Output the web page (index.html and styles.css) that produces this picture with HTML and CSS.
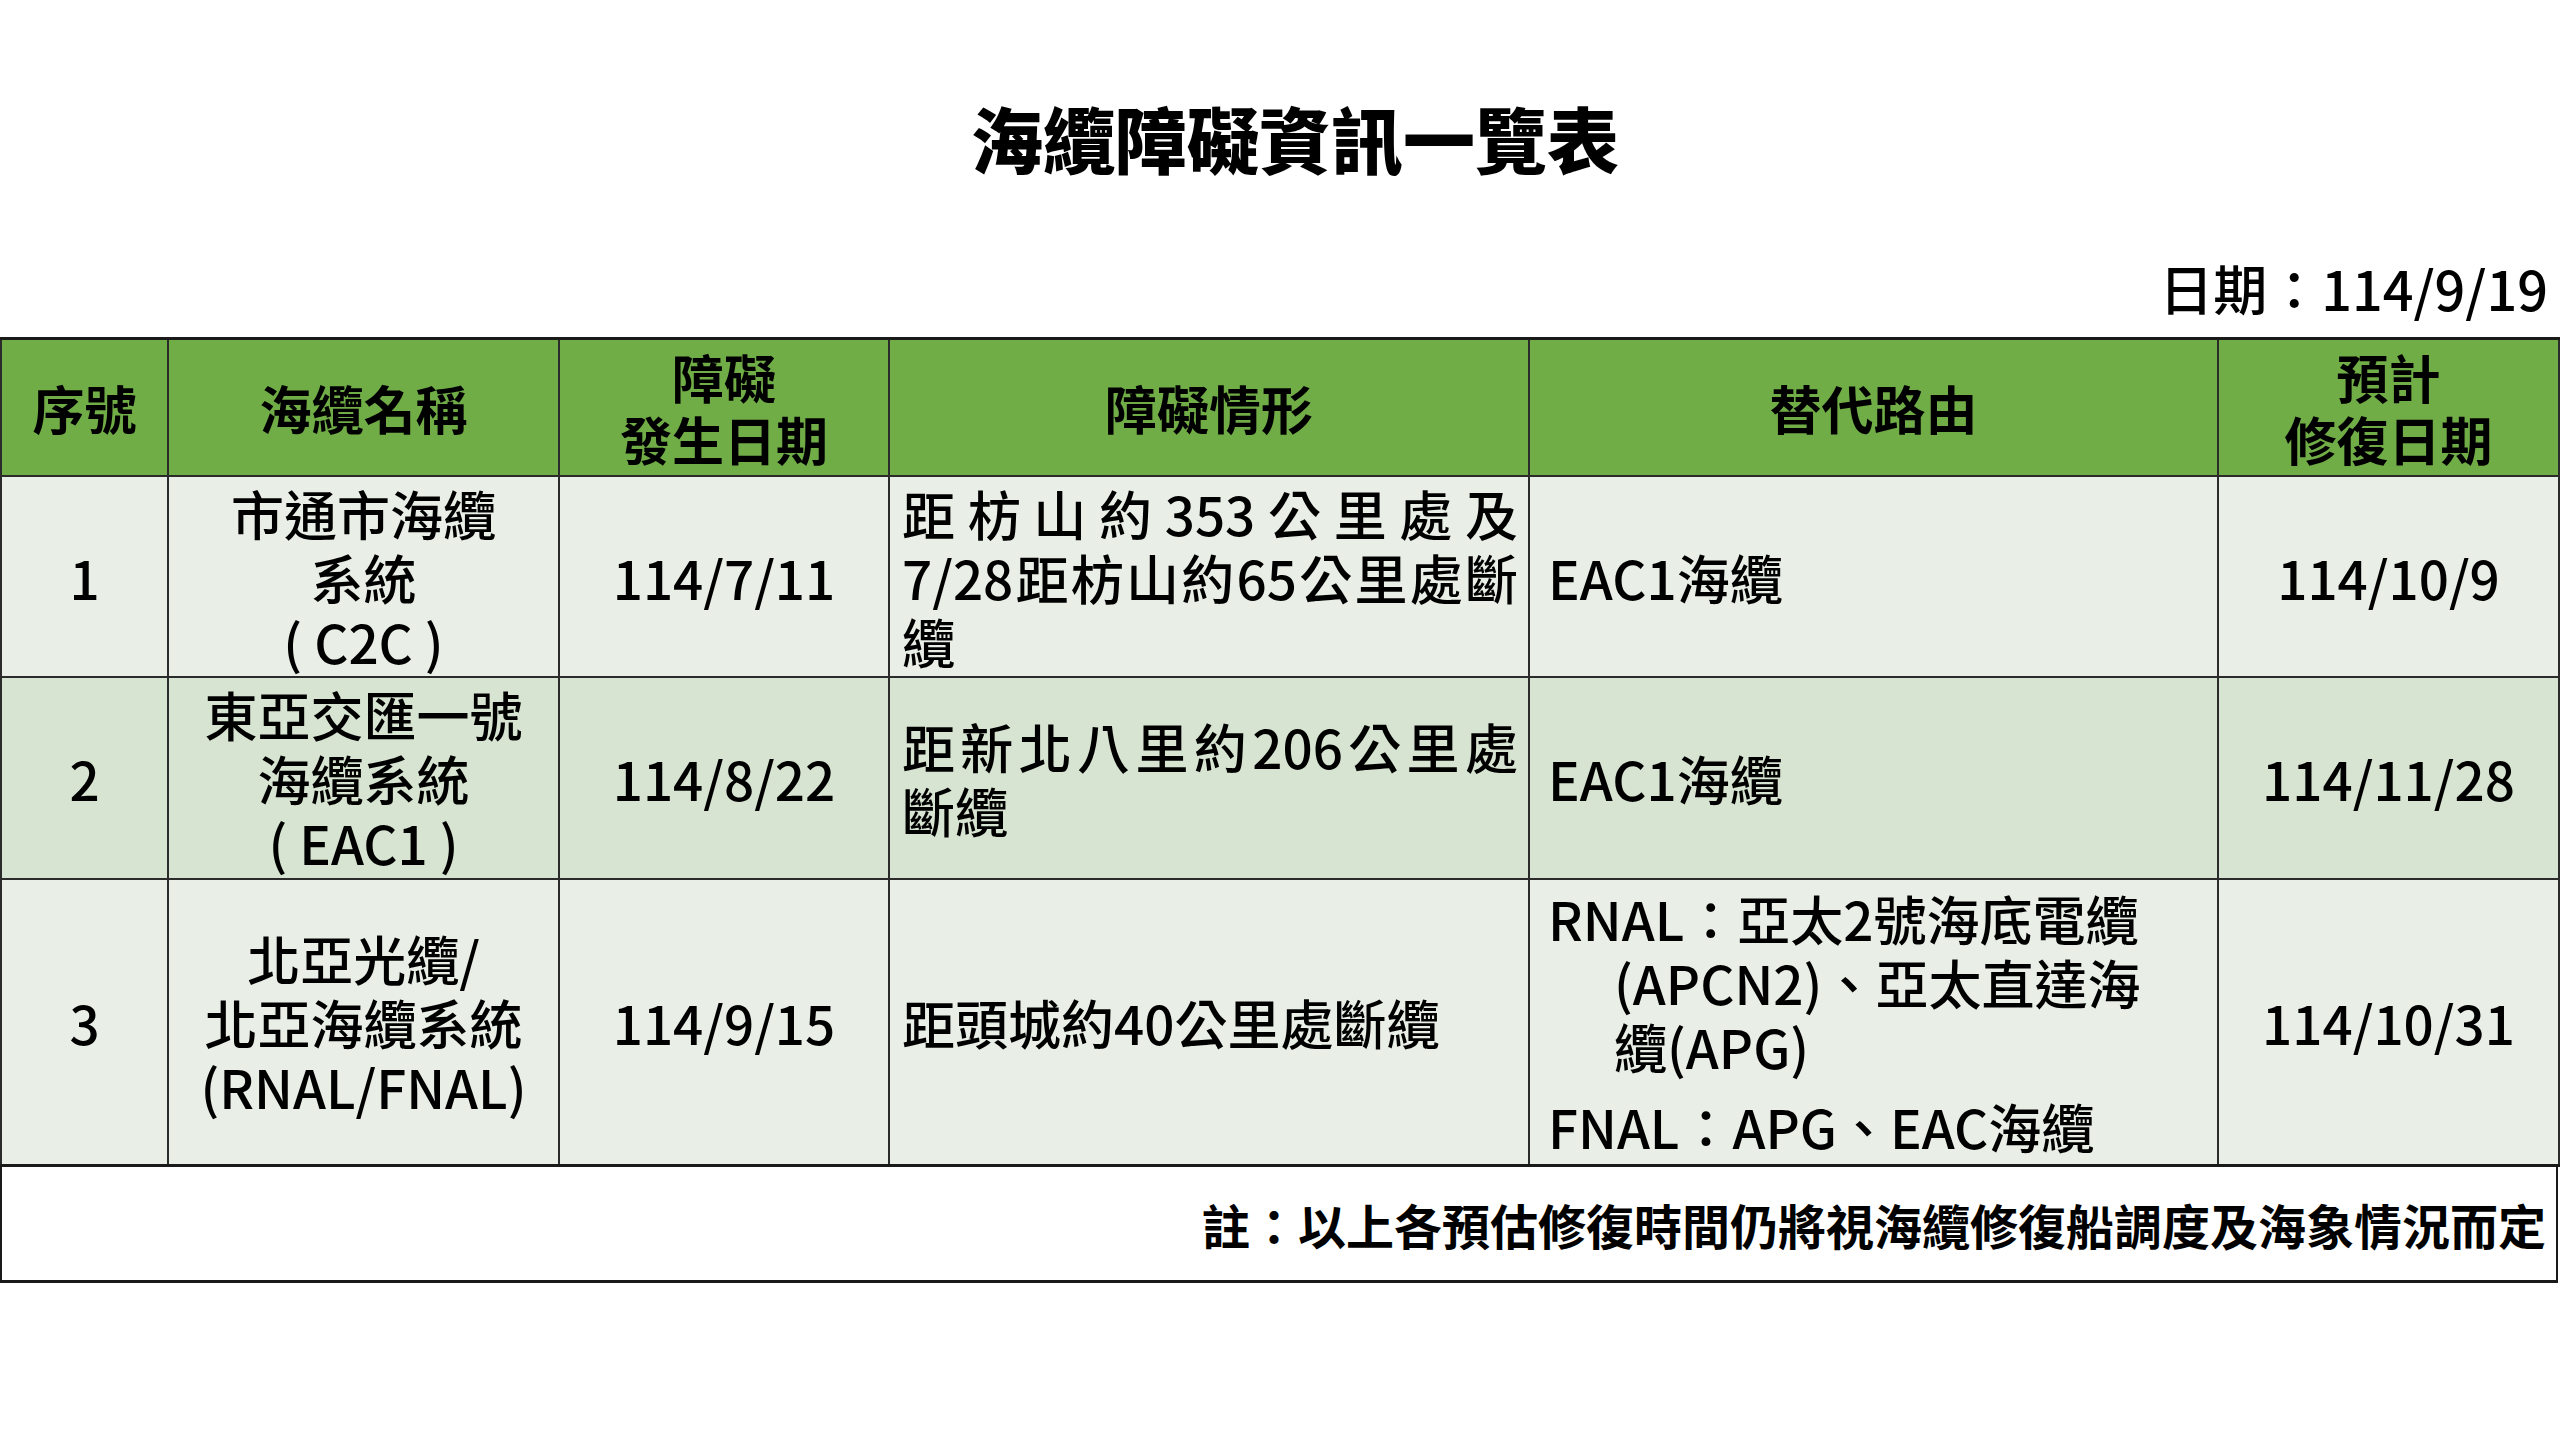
FILE: index.html
```html
<!DOCTYPE html>
<html lang="zh-Hant">
<head>
<meta charset="utf-8">
<title>海纜障礙資訊一覽表</title>
<link rel="stylesheet" href="styles.css">
</head>
<body>
<h1 class="title">海纜障礙資訊一覽表</h1>
<div class="date">日期：114/9/19</div>
<table class="grid">
  <colgroup>
    <col class="c1"><col class="c2"><col class="c3"><col class="c4"><col class="c5"><col class="c6">
  </colgroup>
  <thead>
    <tr class="head">
      <th>序號</th>
      <th>海纜名稱</th>
      <th>障礙<br>發生日期</th>
      <th>障礙情形</th>
      <th>替代路由</th>
      <th>預計<br>修復日期</th>
    </tr>
  </thead>
  <tbody>
    <tr class="row light r1">
      <td class="ctr">1</td>
      <td class="ctr">市通市海纜<br>系統<br>( C2C )</td>
      <td class="ctr">114/7/11</td>
      <td class="desc"><span class="jl">距枋山約353公里處及</span><span class="jl">7/28距枋山約65公里處斷</span><span class="ln">纜</span></td>
      <td class="route">EAC1海纜</td>
      <td class="ctr">114/10/9</td>
    </tr>
    <tr class="row dark r2">
      <td class="ctr">2</td>
      <td class="ctr">東亞交匯一號<br>海纜系統<br>( EAC1 )</td>
      <td class="ctr">114/8/22</td>
      <td class="desc"><span class="jl">距新北八里約206公里處</span><span class="ln">斷纜</span></td>
      <td class="route">EAC1海纜</td>
      <td class="ctr">114/11/28</td>
    </tr>
    <tr class="row light r3">
      <td class="ctr">3</td>
      <td class="ctr">北亞光纜/<br>北亞海纜系統<br>(RNAL/FNAL)</td>
      <td class="ctr">114/9/15</td>
      <td class="desc">距頭城約40公里處斷纜</td>
      <td class="route">
        <p class="para">RNAL：亞太2號海底電纜<br>(APCN2)、亞太直達海<br>纜(APG)</p>
        <p class="para gap">FNAL：APG、EAC海纜</p>
      </td>
      <td class="ctr">114/10/31</td>
    </tr>
  </tbody>
</table>
<div class="note">註：以上各預估修復時間仍將視海纜修復船調度及海象情況而定</div>
</body>
</html>
```
FILE: styles.css
```css
html, body {
  margin: 0;
  padding: 0;
  background: #ffffff;
}
body {
  width: 2560px;
  font-family: "Noto Sans CJK TC", "Noto Sans", sans-serif;
  color: #000000;
}
.title {
  margin: 0;
  padding-top: 95px;
  font-size: 72px;
  line-height: 84px;
  font-weight: 900;
  text-align: center;
  padding-left: 30px;
}
.date {
  margin-top: 77px;
  height: 64px;
  font-size: 54px;
  line-height: 64px;
  font-weight: 500;
  text-align: right;
  padding-right: 12px;
}
.grid {
  margin-top: 17px;
  width: 2558px;
  border-collapse: collapse;
  table-layout: fixed;
  border-top: 3px solid #1a1a1a;
  border-bottom: 3px solid #1a1a1a;
  border-left: 2px solid #1a1a1a;
  border-right: 2px solid #1a1a1a;
}
.c1 { width: 167px; }
.c2 { width: 391px; }
.c3 { width: 330px; }
.c4 { width: 640px; }
.c5 { width: 689px; }
.c6 { width: 341px; }
.grid th, .grid td {
  border: 2px solid #2b2b2b;
  padding: 0;
  vertical-align: middle;
}
.head th {
  background: #70ad47;
  height: 135px;
  font-size: 52px;
  line-height: 62px;
  font-weight: 700;
  text-align: center;
}
.row td {
  font-size: 53px;
  line-height: 64px;
  font-weight: 500;
}
.light td { background: #e9efe7; }
.dark td { background: #d7e4d1; }
.r1 td { height: 199px; }
.r2 td { height: 200px; }
.r3 td { height: 284px; }
.ctr { text-align: center; }
.desc {
  padding: 0 10px 0 12px !important;
  text-align: left;
}
.jl {
  display: block;
  text-align: justify;
  text-align-last: justify;
}
.ln {
  display: block;
  text-align: left;
}
.route {
  padding: 0 12px 0 18px !important;
  text-align: left;
}
.para {
  margin: 0;
  padding-left: 66px;
  text-indent: -66px;
}
.gap { margin-top: 16px; }
.note {
  width: 2558px;
  box-sizing: border-box;
  height: 116px;
  border-left: 2px solid #1a1a1a;
  border-right: 2px solid #1a1a1a;
  border-bottom: 3px solid #1a1a1a;
  display: flex;
  align-items: center;
  justify-content: flex-end;
  padding-right: 10px;
  font-size: 48px;
  font-weight: 700;
  line-height: 60px;
}
```
